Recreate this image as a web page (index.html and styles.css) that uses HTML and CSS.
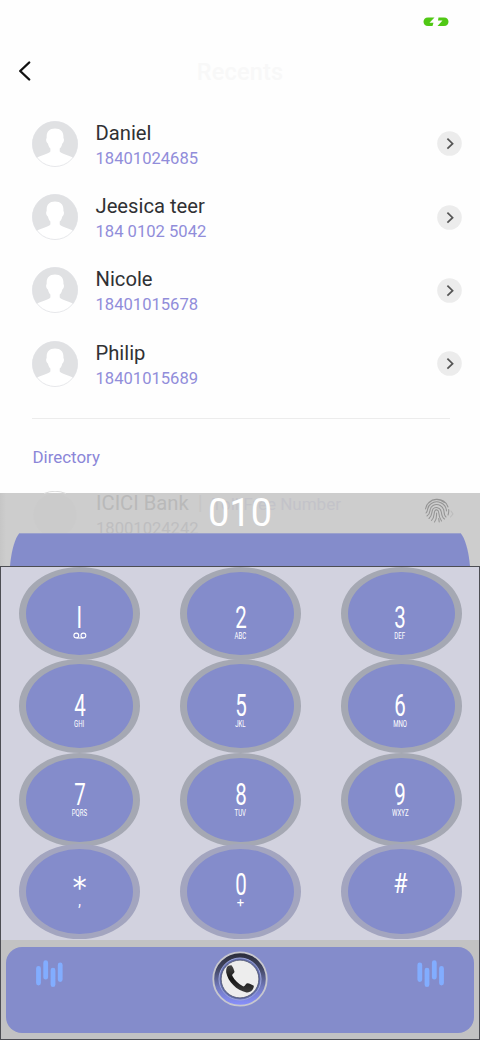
FILE: index.html
```html
<!DOCTYPE html>
<html lang="en">
<head>
<meta charset="utf-8">
<title>Recents</title>
<link rel="stylesheet" href="styles.css">
</head>
<body>
<svg class="defs" width="0" height="0">
  <defs>
    <symbol id="avatar" viewBox="0 0 46 46">
      <circle cx="23" cy="23" r="22.700" fill="#e0e1e3"/>
      <path d="M23 7.500C17 7.500 14.200 11 14.700 17C13.500 18 14.300 22 15.900 22.500C16.500 25 17.300 26.500 18.400 27.500V30.500C16 33.500 8.500 34 4.500 37A22.500 22.500 0 0 0 41.500 37C37.500 34 30 33.500 27.700 30.500V27.500C29 26.500 29.800 25 30.300 22.500C31.800 22 32.600 18 31.400 17C31.900 11 29 7.500 23 7.500Z" fill="#fff"/>
      <circle cx="23" cy="23" r="22.500" fill="none" stroke="#dfe1e4" stroke-width=".8"/>
    </symbol>
    <symbol id="next" viewBox="0 0 25 25">
      <circle cx="12.500" cy="12.500" r="12.300" fill="#ececec"/>
      <path d="M10.400 7.700L15.600 12.700L10.400 17.700" fill="none" stroke="#555" stroke-width="1.700"/>
    </symbol>
  </defs>
</svg>
<div class="phone">
  <div class="status">
    <svg width="26" height="10" viewBox="0 0 26 10"><path d="M5 .5H11.500L6.500 5.800H10.500L9.500 9H5C-1 9-1 .5 5 .5ZM15.500 .5H21C27 .5 27 9 21 9H14.500L19.500 3.500H15Z" fill="#50c814"/></svg>
  </div>
  <header class="header">
    <svg class="back" width="14" height="22" viewBox="0 0 14 22"><path d="M11.200 2.500L2.200 11L11.200 19.500" fill="none" stroke="#111" stroke-width="2.400" stroke-linecap="round" stroke-linejoin="round"/></svg>
    <h1 class="title">Recents</h1>
  </header>
  <main class="contacts">
    <div class="contact"><svg class="avatar"><use href="#avatar"/></svg><div class="info"><div class="name">Daniel</div><div class="number">18401024685</div></div><svg class="next"><use href="#next"/></svg></div>
    <div class="contact"><svg class="avatar"><use href="#avatar"/></svg><div class="info"><div class="name">Jeesica teer</div><div class="number">184 0102 5042</div></div><svg class="next"><use href="#next"/></svg></div>
    <div class="contact"><svg class="avatar"><use href="#avatar"/></svg><div class="info"><div class="name">Nicole</div><div class="number">18401015678</div></div><svg class="next"><use href="#next"/></svg></div>
    <div class="contact"><svg class="avatar"><use href="#avatar"/></svg><div class="info"><div class="name">Philip</div><div class="number">18401015689</div></div><svg class="next"><use href="#next"/></svg></div>
  </main>
  <div class="divider"></div>
  <h2 class="directory">Directory</h2>

  <section class="dialer">
    <div class="display">
      <div class="entry">
        <svg class="ghost-avatar" width="46" height="42" viewBox="0 -2 46 42"><path d="M12 .5Q23-4 34 .5" fill="none" stroke="#dcdcdc"/><circle cx="23" cy="22" r="21.500" fill="#cbcbcb"/></svg>
        <div class="ghost"><div class="ghost-name">ICICI Bank <span class="bar">|</span> <span class="toll">Toll Free Number</span></div><div class="ghost-number">18001024242</div></div>
        <div class="typed">010</div>
        <svg class="finger" width="30" height="26" viewBox="0 0 30 26" fill="none" stroke="#949494" stroke-width="1.050" stroke-linecap="round">
          <path d="M4.500 5Q12-2 20.500 4.500M1.500 11C3-1 21-2 24 9M2 15C5 12 2 9 7 5.700C13 1.500 22 5 22.500 13M3 18C8 15 4 10 9 7.500C14 5 19.500 8 20 13.500C20.200 16 20.500 18 22 19M5 20.500C9 17 7 14 9 11C11 8.500 16.500 9 17.300 14C17.700 17 18.500 20 20.500 21M7.500 22.500C11 19 9.500 15.500 10.800 13C12 11 14.500 12 14.700 14.500C15 18 16 21 17.500 23M10.500 24C13 21 12.500 18 12.600 15M14.700 20.500L15.200 24M24.700 11.500C25 14 24.500 15.500 24 17"/>
          <path d="M27 13L29 16L26.500 19" stroke="#bcbcbc"/>
        </svg>
      </div>
      <svg class="tray" width="480" height="33" viewBox="0 0 480 33"><path d="M10 33C11.500 17 15 5 19.500 0H460.500C465 5 468.500 17 470 33Z" fill="#848ccb"/><path d="M19 .5H461" stroke="#9ba1cc"/></svg>
    </div>
    <div class="pad">
      <div class="keys">
        <div class="key r1"><span class="digit">I</span><svg class="vm" width="14" height="7" viewBox="0 0 14 7"><path d="M3.700 6H10.300" stroke="#fff" stroke-width="1.100"/><circle cx="3.300" cy="3.500" r="2.400" fill="none" stroke="#fff" stroke-width="1.100"/><circle cx="10.400" cy="3.500" r="2.400" fill="none" stroke="#fff" stroke-width="1.100"/></svg></div>
        <div class="key r1"><span class="digit">2</span><span class="sub">ABC</span></div>
        <div class="key r1 c3"><span class="digit">3</span><span class="sub">DEF</span></div>
        <div class="key r2"><span class="digit">4</span><span class="sub">GHI</span></div>
        <div class="key r2"><span class="digit">5</span><span class="sub">JKL</span></div>
        <div class="key r2 c3"><span class="digit">6</span><span class="sub">MNO</span></div>
        <div class="key r3"><span class="digit">7</span><span class="sub">PQRS</span></div>
        <div class="key r3"><span class="digit">8</span><span class="sub">TUV</span></div>
        <div class="key r3 c3"><span class="digit">9</span><span class="sub">WXYZ</span></div>
        <div class="key r4"><span class="digit star">*</span><span class="sub comma">,</span></div>
        <div class="key r4"><span class="digit">0</span><span class="sub plus">+</span></div>
        <div class="key r4 c3"><span class="digit hash">#</span></div>
      </div>
      <div class="footer">
        <div class="callbar">
          <svg width="28" height="28" viewBox="0 0 28 28" stroke="#82adff" stroke-width="4.800" stroke-linecap="round"><path d="M3.500 8.500V23M10.700 2.700V17.200M18 10.200V24.700M25.200 5V19.500"/></svg>
          <svg class="call" width="58" height="58" viewBox="0 0 58 58">
            <defs>
              <linearGradient id="ring" x1="0" y1="0" x2="0" y2="1"><stop offset="0" stop-color="#292b37"/><stop offset=".3" stop-color="#414560"/><stop offset=".65" stop-color="#7179bd"/><stop offset="1" stop-color="#8890ff"/></linearGradient>
              <linearGradient id="handset" x1="0" y1="0" x2="0" y2="1"><stop offset="0" stop-color="#484848"/><stop offset=".5" stop-color="#151515"/><stop offset="1" stop-color="#3c3c3c"/></linearGradient>
            </defs>
            <circle cx="29" cy="29" r="26.700" fill="url(#ring)" stroke="#c7c7ce" stroke-width="1.800"/>
            <circle cx="29" cy="29" r="21" fill="#6670ae" stroke="#9da7dd" stroke-width="1"/>
            <circle cx="29" cy="29" r="18.900" fill="#ededed" stroke="#404766" stroke-width=".8"/>
            <path d="M16 17Q17 15 20.500 15.200C22 17 22.700 19 23.400 21.300C24 23 20.700 24 21.300 25.700C23.500 30 27.500 34 32 36.300C33.800 37 34.500 33.500 36.300 33.200C38.700 33.500 41 34.500 42.800 35.700C43 39 40 42.800 35.500 42.400C25.500 40.500 17 31.500 15.200 22.500C15 20 15.300 18.500 16 17Z" fill="url(#handset)"/>
          </svg>
          <svg width="28" height="28" viewBox="0 0 28 28" stroke="#82adff" stroke-width="4.800" stroke-linecap="round"><path d="M2.800 5V19.500M10 10.200V24.700M17.300 2.700V17.200M24.500 8.500V23"/></svg>
        </div>
      </div>
    </div>
  </section>
</div>
</body>
</html>
```
FILE: styles.css
```css
* { box-sizing: border-box; }
body { margin: 0; font-family: Roboto, "Liberation Sans", sans-serif; background: #fefefe; }
.defs { position: absolute; }
.phone { width: 480px; height: 1040px; display: flex; flex-direction: column; overflow: hidden; background: #fefefe; }
.status { height: 44px; padding: 17px 31px 0 0; display: flex; justify-content: flex-end; flex: none; }
.header { height: 63px; flex: none; display: grid; grid-template-columns: 50px 380px 50px; padding-top: 13px; align-items: start; }
.back { margin: 3px 0 0 18px; }
.title { margin: 0; text-align: center; font-size: 23.5px; line-height: 30px; font-weight: 500; color: #f8f8f8; letter-spacing: .2px; }

.contacts { flex: none; }
.contact { display: flex; height: 73.35px; padding: 0 18px 0 32px; align-items: center; }
.avatar { width: 46px; height: 46px; flex: none; }
.info { flex: 1; padding-left: 17.500px; }
.next { width: 25px; height: 25px; flex: none; }
.name { font-size: 20.200px; line-height: 27px; color: #303134; margin-top: 2px; }
.number { font-size: 16.600px; line-height: 23px; color: #918dda; }
.divider { height: 1px; background: #ececec; margin: 17.600px 30px 0 32px; flex: none; }
.directory { margin: 24px 0 0 32.500px; height: 50px; flex: none; font-size: 16.900px; line-height: 28px; font-weight: 400; color: #8b86d8; }

.dialer { height: 547px; flex: none; }
.display { height: 73px; background: linear-gradient(90deg, #c6c6c6 0, #cdcdcd 6px); display: flex; flex-direction: column; }
.entry { height: 40px; display: grid; grid-template-columns: 480px; grid-template-rows: 40px; }
.entry > * { grid-area: 1 / 1; }
.ghost-avatar { margin: -2px 0 0 32px; }
.ghost { padding-left: 96px; height: 40px; }
.ghost-name { font-size: 20.200px; line-height: 20px; color: #b9b9b9; white-space: nowrap; }
.bar { color: #c6c6c6; margin: 0 4px; }
.toll { font-size: 17px; color: #c3c3c9; }
.ghost-number { font-size: 16.600px; line-height: 20px; padding-top: 5px; color: #bebec0; }
.typed { text-align: center; color: #fff; font-size: 38px; line-height: 40px; }
.finger { margin: 5px 0 0 424px; }
.tray { display: block; position: relative; }

.pad { height: 474px; border: 1px solid #4c4d53; background: #d2d2df; }
.keys { height: 373px; padding-left: 18px; display: grid; grid-template-columns: repeat(3, 121px); grid-template-rows: 92.500px 93.500px 91px 96px; column-gap: 40px; }
.key { border-radius: 50%; border: solid #a5a8b3; border-width: 5px 7px; background: #848ccb; color: #fff; display: flex; flex-direction: column; align-items: center; }
.r1 { height: 93px; padding-top: 31px; }
.r2 { height: 93.500px; padding-top: 27px; }
.r3 { height: 94px; padding-top: 22.500px; }
.r4 { height: 95.500px; padding-top: 21px; border-color: #a3a5bf; }
.c3 { padding-right: 3px; }
.digit { font-size: 32px; line-height: 28px; height: 28px; transform: scaleX(.64); }
.sub { font-size: 9.800px; line-height: 10px; transform: scaleX(.62); }
.vm { margin-top: 1px; }
.star { font-family: "DejaVu Sans", sans-serif; font-size: 31px; line-height: 35px; transform: scaleX(.92); }
.comma { font-size: 17px; line-height: 4px; transform: scaleX(.8); }
.plus { font-size: 13px; line-height: 10px; transform: none; }
.hash { font-size: 27px; transform: scaleX(.86); }

.footer { height: 99px; padding: 7px 5px 6px; background: #c2c2c3; }
.callbar { height: 86px; border-radius: 16px; background: #848ccb; display: flex; justify-content: space-between; padding: 13px 29px 0; }
.call { margin-top: -10px; }
```
